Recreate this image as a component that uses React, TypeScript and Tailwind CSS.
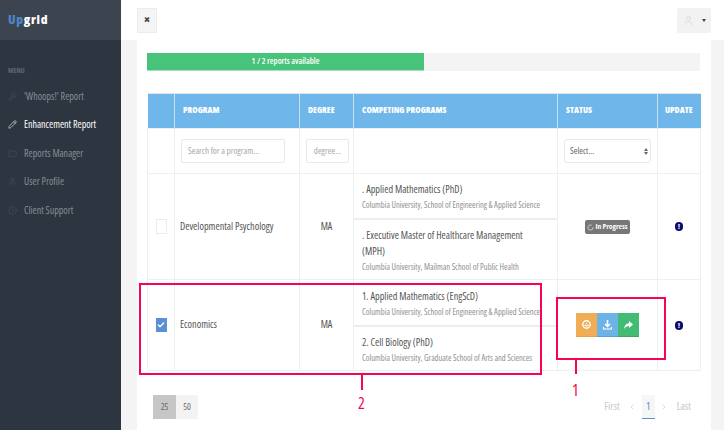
import { Wrench, Pencil, Folder, User, CircleHelp, Check, LoaderCircle, ChevronLeft, ChevronRight } from "lucide-react";

const menu = [
  { label: "'Whoops!' Report", Icon: Wrench },
  { label: "Enhancement Report", Icon: Pencil, active: true },
  { label: "Reports Manager", Icon: Folder },
  { label: "User Profile", Icon: User },
  { label: "Client Support", Icon: CircleHelp },
];

const th = "border-l border-[#c5dff5] px-[8px] text-left text-[8.7px] font-extrabold text-white";
const td = "border border-[#efefef] align-middle";

function Program({ title, school, last }: { title: string; school: string; last?: boolean }) {
  return (
    <div className={last ? "px-[8px] pb-[5px] pt-[7px]" : "border-b-2 border-[#eeeeee] px-[8px] pb-[7px] pt-[6px]"}>
      <div className="pr-[16px] text-[10.2px] font-medium leading-[16px] text-[#555]">{title}</div>
      <div className="mt-[2px] text-[8.5px] leading-[12px] text-[#8f8f8f]">{school}</div>
    </div>
  );
}

function Bang() {
  return (
    <span className="mx-auto flex h-[9px] w-[8px] items-center justify-center rounded-full bg-[#0b0b70] text-[7px] font-extrabold leading-none text-white">
      !
    </span>
  );
}

export default function App() {
  return (
    <div className="relative flex h-[430px] w-[724px] overflow-hidden bg-[#f4f4f4] font-['Open_Sans',sans-serif] [font-stretch:75%]">
      <aside className="w-[121px] shrink-0 bg-[#2d3540]">
        <div className="flex h-[40px] items-center bg-[#3b444f] pl-[8px] text-[13px] font-extrabold tracking-[0.7px]">
          <span className="text-[#4f86c6]">Up</span>
          <span className="text-white">grid</span>
        </div>
        <div className="pl-[8px] pt-[26px] text-[7px] font-bold leading-[10px] text-[#5f6873]">MENU</div>
        <ul className="mt-[6px]">
          {menu.map(({ label, Icon, active }) => (
            <li
              key={label}
              className={`flex h-[28.5px] items-center gap-[7px] pl-[8px] text-[10px] ${active ? "font-medium text-white" : "text-[#868d96]"}`}
            >
              <Icon size={9} strokeWidth={1.5} className={active ? "text-white" : "text-[#4a535e]"} />
              {label}
            </li>
          ))}
        </ul>
      </aside>

      <div className="flex min-w-0 flex-1 flex-col">
        <header className="flex h-[40px] items-center justify-between bg-white pl-[16px] pr-[13px]">
          <button className="flex h-[25px] w-[20px] items-center justify-center border border-[#ececec] bg-[#f5f5f5] text-[12px] font-extrabold leading-none text-[#444]">
            ×
          </button>
          <button className="flex h-[25px] w-[34px] items-center justify-center gap-[8px] rounded-[2px] bg-[#f2f2f2]">
            <User size={11} strokeWidth={1.5} className="text-[#d2d2d2]" />
            <span className="h-0 w-0 border-x-[2.5px] border-t-[3px] border-x-transparent border-t-[#444]" />
          </button>
        </header>

        <main className="ml-[16px] mr-[13px] flex-1 bg-white px-[10px] pt-[13px]">
          <div className="h-[18px] w-[553px] rounded-[1px] bg-[#f4f4f4]">
            <div className="flex h-[18px] w-[277px] items-center justify-center border-b border-[#a5e0bc] bg-[#47c47a] text-[8.5px] font-semibold text-white">
              1 / 2 reports available
            </div>
          </div>

          <table className="mt-[22px] w-[553px] table-fixed border-collapse border-t border-[#e4e4e4]">
            <colgroup>
              <col className="w-[27px]" />
              <col className="w-[125px]" />
              <col className="w-[54px]" />
              <col className="w-[204px]" />
              <col className="w-[100px]" />
              <col className="w-[43px]" />
            </colgroup>
            <thead>
              <tr className="h-[35px] bg-[#6fb7ea]">
                <th className="border-0" />
                <th className={th}>PROGRAM</th>
                <th className={th}>DEGREE</th>
                <th className={th}>COMPETING PROGRAMS</th>
                <th className={th}>STATUS</th>
                <th className="border-l border-[#c5dff5] pl-[7px] text-left text-[8.7px] font-extrabold text-white">UPDATE</th>
              </tr>
            </thead>
            <tbody>
              <tr className="h-[45px]">
                <td className={td} />
                <td className={`${td} pl-[6px] pr-[14px]`}>
                  <div className="flex h-[24px] items-center rounded-[2px] border border-[#e9e9e9] px-[6px] text-[9px] font-medium text-[#a8a8a8]">
                    Search for a program...
                  </div>
                </td>
                <td className={`${td} pl-[6px] pr-[4px]`}>
                  <div className="flex h-[24px] items-center justify-center rounded-[2px] border border-[#e9e9e9] text-[9px] font-medium text-[#a8a8a8]">
                    degree...
                  </div>
                </td>
                <td className={td} />
                <td className={`${td} px-[6px]`}>
                  <div className="flex h-[24px] items-center justify-between rounded-[3px] border border-[#e9e9e9] pl-[5px] pr-[2px] text-[9px] font-medium text-[#666]">
                    Select...
                    <span className="flex flex-col gap-[1px]">
                      <span className="h-0 w-0 border-x-[2px] border-b-[3px] border-x-transparent border-b-[#666]" />
                      <span className="h-0 w-0 border-x-[2px] border-t-[3px] border-x-transparent border-t-[#666]" />
                    </span>
                  </div>
                </td>
                <td className={td} />
              </tr>
              <tr className="h-[106px]">
                <td className={td}>
                  <div className="mx-auto h-[15px] w-[11px] border border-[#ececec]" />
                </td>
                <td className={`${td} px-[5px] text-[10.2px] font-medium text-[#555]`}>Developmental Psychology</td>
                <td className={`${td} text-center text-[10.2px] font-medium text-[#555]`}>MA</td>
                <td className={td}>
                  <Program title=". Applied Mathematics (PhD)" school="Columbia University, School of Engineering & Applied Science" />
                  <Program title=". Executive Master of Healthcare Management (MPH)" school="Columbia University, Mailman School of Public Health" last />
                </td>
                <td className={`${td} pb-[4px] text-center`}>
                  <span className="inline-flex h-[14px] items-center gap-[1px] rounded-[2px] bg-[#777] px-[2px] text-[7.5px] font-bold text-white">
                    <LoaderCircle size={7} strokeWidth={2} />
                    In Progress
                  </span>
                </td>
                <td className={td}><Bang /></td>
              </tr>
              <tr className="h-[91px]">
                <td className={td}>
                  <div className="mx-auto flex h-[14px] w-[11px] items-center justify-center bg-[#5b8fd6]">
                    <Check size={8} strokeWidth={4} className="text-white" />
                  </div>
                </td>
                <td className={`${td} px-[5px] text-[10.2px] font-medium text-[#555]`}>Economics</td>
                <td className={`${td} text-center text-[10.2px] font-medium text-[#555]`}>MA</td>
                <td className={td}>
                  <Program title="1. Applied Mathematics (EngScD)" school="Columbia University, School of Engineering & Applied Science" />
                  <Program title="2. Cell Biology (PhD)" school="Columbia University, Graduate School of Arts and Sciences" last />
                </td>
                <td className={td}>
                  <div className="flex justify-center">
                    <span className="flex h-[24px] w-[21px] items-center justify-center border-b border-[#e5a24c] bg-[#f0ad55] text-white">
                      <svg width="9" height="9" viewBox="0 0 9 9" fill="none" stroke="currentColor">
                        <circle cx="4.5" cy="4.5" r="3.7" strokeWidth="1.4" />
                        <path d="M2.6 4.8c.5 1.4 3.3 1.4 3.8 0" strokeWidth="1.2" />
                        <circle cx="4.5" cy="3.4" r=".7" fill="currentColor" stroke="none" />
                      </svg>
                    </span>
                    <span className="flex h-[24px] w-[21px] items-center justify-center border-b border-[#55a0dc] bg-[#6cb4e8] text-white">
                      <svg width="9" height="10" viewBox="0 0 9 10" fill="none" stroke="currentColor" strokeWidth="1.5">
                        <path d="M4.5 0v6M2 4l2.5 2.5L7 4" />
                        <path d="M.5 7v2h8V7" strokeWidth="1.2" />
                      </svg>
                    </span>
                    <span className="flex h-[24px] w-[21px] items-center justify-center border-b border-[#35a862] bg-[#42bb74] text-white">
                      <svg width="9" height="8" viewBox="0 0 9 8" fill="currentColor">
                        <path d="M5 0l4 3.5L5 7V5C3 5 1.5 5.7 0 8c.3-3.2 2-5.6 5-6z" />
                      </svg>
                    </span>
                  </div>
                </td>
                <td className={td}><Bang /></td>
              </tr>
            </tbody>
          </table>

          <div className="mt-[24px] flex items-center justify-between pl-[6px] pr-[10px]">
            <div className="flex text-[9px] font-medium text-[#666]">
              <span className="flex h-[24px] w-[23px] items-center justify-center bg-[#c6c6c6]">25</span>
              <span className="flex h-[24px] w-[22px] items-center justify-center bg-[#f3f3f3]">50</span>
            </div>
            <div className="flex items-center text-[10.5px] font-medium text-[#c8c8c8]">
              First
              <ChevronLeft size={8} className="ml-[8px]" />
              <span className="ml-[6px] flex h-[24px] w-[13px] items-center justify-center border-b border-[#5b8fd6] bg-[#f6f6f6] text-[#5b8fd6]">1</span>
              <ChevronRight size={8} className="ml-[5px]" />
              <span className="ml-[9px]">Last</span>
            </div>
          </div>
        </main>
      </div>

      {/* annotations over the table */}
      <div className="absolute left-[139px] top-[283px] h-[92px] w-[403px] border-2 border-[#f5064f]" />
      <div className="absolute left-[361px] top-[375px] h-[15px] w-[2px] bg-[#f5064f]" />
      <div className="absolute left-[358px] top-[394px] text-[16px] leading-[18px] text-[#f5064f]">2</div>
      <div className="absolute left-[556px] top-[297px] h-[63px] w-[110px] border-2 border-[#f5064f]" />
      <div className="absolute left-[575px] top-[360px] h-[14px] w-[2px] bg-[#f5064f]" />
      <div className="absolute left-[572px] top-[381px] text-[16px] leading-[18px] text-[#f5064f]">1</div>
    </div>
  );
}
